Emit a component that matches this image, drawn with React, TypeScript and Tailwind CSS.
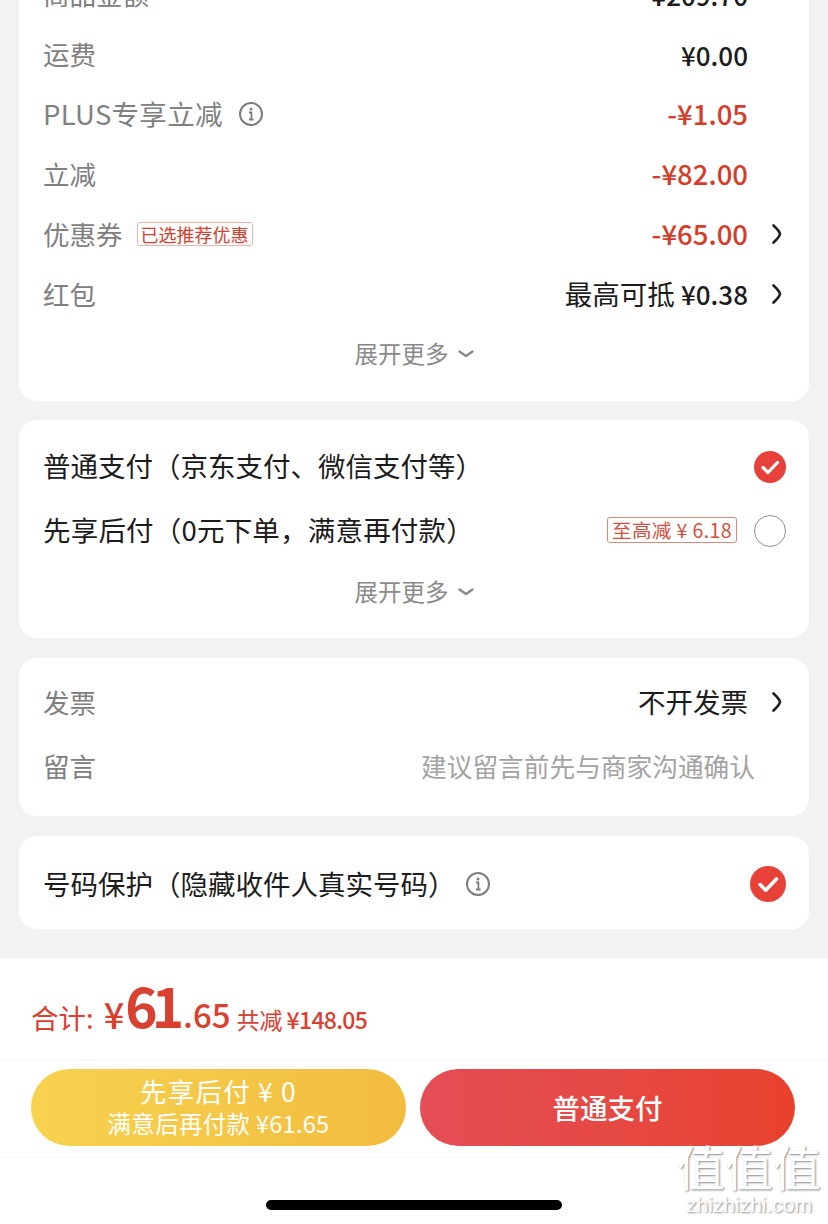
import React from "react";

const font = { fontFamily: '"Noto Sans CJK SC", "Noto Sans", sans-serif' };

const Chevron = () => (
  <svg width="10" height="22" viewBox="0 0 10 22" className="ml-[24px] mr-[-1px] shrink-0">
    <path d="M1.5 2.5 Q7.5 8 8 11 Q7.5 14 1.5 19.5" fill="none" stroke="#1f1f1f" strokeWidth="2.6" strokeLinecap="round" />
  </svg>
);

const Info = () => (
  <svg width="26" height="26" viewBox="0 0 26 26" className="shrink-0">
    <circle cx="13" cy="13" r="11" fill="none" stroke="#7d7d7d" strokeWidth="2" />
    <circle cx="13" cy="8" r="1.5" fill="#7d7d7d" />
    <path d="M11 11.5h2.4v7M11 18.5h4.6" fill="none" stroke="#7d7d7d" strokeWidth="1.8" />
  </svg>
);

const Checked = ({ size }: { size: number }) => (
  <svg width={size} height={size} viewBox="0 0 32 32" className="shrink-0">
    <circle cx="16" cy="16" r="16" fill="#e8413a" />
    <path d="M9 16.5l5 5L23.5 11.5" fill="none" stroke="#fff" strokeWidth="3.2" strokeLinecap="round" strokeLinejoin="round" />
  </svg>
);

const More = () => (
  <div className="flex items-center justify-center h-[60px] text-[23.5px] text-[#8a8a8a]">
    <span>展开更多</span>
    <svg width="16" height="10" viewBox="0 0 16 10" className="ml-[9px]">
      <path d="M1.5 2.5 L8 7 L14.5 2.5" fill="none" stroke="#8a8a8a" strokeWidth="2.4" strokeLinecap="round" />
    </svg>
  </div>
);

const Row = ({ children }: { children: React.ReactNode }) => (
  <div className="flex items-center h-[60px] pl-[24px] pr-[28px]">{children}</div>
);

const Label = ({ children }: { children: React.ReactNode }) => (
  <span className="text-[#808080] text-[26.5px]">{children}</span>
);

export default function App() {
  return (
    <div style={font} className="relative h-[1224px] w-[828px] overflow-hidden bg-[#f2f2f2] text-[27.5px] text-[#1c1c1c]">
      <div className="mt-[-36px] mx-[19px] bg-white rounded-b-[18px] pb-[17px]">
        <Row>
          <Label>商品金额</Label>
          <span className="ml-auto mr-[33px] font-medium text-[26px]">¥209.70</span>
        </Row>
        <Row>
          <Label>运费</Label>
          <span className="ml-auto mr-[33px] font-medium text-[26px]">¥0.00</span>
        </Row>
        <Row>
          <span className="text-[#808080] mr-[15px] tracking-[0.3px]">PLUS专享立减</span>
          <Info />
          <span className="ml-auto mr-[33px] text-[#d43d2a] font-medium">-¥1.05</span>
        </Row>
        <Row>
          <Label>立减</Label>
          <span className="ml-auto mr-[33px] text-[#d43d2a] font-medium">-¥82.00</span>
        </Row>
        <Row>
          <Label>优惠券</Label>
          <span className="ml-[14px] h-[24px] px-[3px] flex items-center rounded-[3px] border border-[#e9b5ad] text-[18px] text-[#d2402f]">已选推荐优惠</span>
          <span className="ml-auto text-[#d43d2a] font-medium">-¥65.00</span>
          <Chevron />
        </Row>
        <Row>
          <Label>红包</Label>
          <span className="ml-auto">最高可抵 <span className="font-medium text-[26px]">¥0.38</span></span>
          <Chevron />
        </Row>
        <More />
      </div>

      <div className="mt-[19px] mx-[19px] bg-white rounded-[18px] pt-[14px] pb-[16px]">
        <div className="flex items-center h-[64px] pl-[24px] pr-[23px]">
          <span>普通支付（京东支付、微信支付等）</span>
          <span className="ml-auto mt-[2px]"><Checked size={32} /></span>
        </div>
        <div className="flex items-center h-[64px] pl-[24px] pr-[23px]">
          <span className="tracking-[0.2px]">先享后付（0元下单，满意再付款）</span>
          <span className="ml-auto h-[26px] px-[4px] flex items-center rounded-[3px] border border-[#d98a7c] text-[19.5px] tracking-[0.4px] text-[#d2503f]">至高减 ¥ 6.18</span>
          <span className="ml-[17px] mt-[2px] h-[32px] w-[32px] rounded-full border-[1.5px] border-[#8f8f8f]" />
        </div>
        <More />
      </div>

      <div className="mt-[20px] mx-[19px] h-[158px] bg-white rounded-[18px] pt-[12px]">
        <div className="flex items-center h-[64px] pl-[24px] pr-[28px]">
          <Label>发票</Label>
          <span className="ml-auto">不开发票</span>
          <Chevron />
        </div>
        <div className="flex items-center h-[64px] pl-[24px] pr-[54px]">
          <Label>留言</Label>
          <span className="ml-auto text-[#a3a3a3] text-[25.7px]">建议留言前先与商家沟通确认</span>
        </div>
      </div>

      <div className="mt-[20px] mx-[19px] h-[93px] bg-white rounded-[18px] flex items-center pl-[24px] pr-[23px] pt-[2px]">
        <span>号码保护（隐藏收件人真实号码）</span>
        <span className="ml-[9px]"><Info /></span>
        <span className="ml-auto"><Checked size={36} /></span>
      </div>

      <div className="mt-[29px] bg-white h-[266px] flex flex-col">
        <div className="h-[103px] pl-[31px] border-b border-[#f7f7f7] flex items-end pb-[29px] text-[#d8402f] font-medium leading-none">
          <span className="text-[27.5px] font-normal mr-[10px]">合计:</span>
          <span className="text-[36px] tracking-[-1px]">¥</span>
          <span className="text-[55px] leading-[44px] font-semibold tracking-[-6px] ml-[2px] mr-[5px] mb-[5px]">61</span>
          <span className="text-[33px]">.65</span>
          <span className="text-[23px] font-normal ml-[6px]">共减</span>
          <span className="text-[23px] ml-[4px] tracking-[-0.7px]">¥148.05</span>
        </div>
        <div className="h-[97px] pl-[31px] pr-[33px] pt-[8px] border-b border-[#f9f9f9] flex gap-[14px]">
          <div className="flex-1 h-[77px] rounded-full bg-gradient-to-r from-[#f7d24f] to-[#f2bc3e] flex flex-col items-center justify-center text-white">
            <span className="text-[26.5px] leading-[33px] tracking-[1.2px] mt-[-2px]">先享后付 ¥ 0</span>
            <span className="text-[23.5px] leading-[32px] tracking-[0.3px]">满意后再付款 ¥61.65</span>
          </div>
          <div className="flex-1 h-[77px] rounded-full bg-gradient-to-r from-[#e44e56] to-[#e8412c] flex items-center justify-center text-white font-medium text-[27.5px]">
            普通支付
          </div>
        </div>
        <div className="flex-1 flex justify-center pt-[42px]">
          <div className="h-[10px] w-[296px] rounded-full bg-black" />
        </div>
      </div>

      <div className="absolute left-[676px] top-[1138px] w-[146px] flex flex-col items-center text-white [text-shadow:1px_1px_2px_#8a8a8a]">
        <span className="text-[48px] leading-[54px] whitespace-nowrap">值值值</span>
        <span className="text-[21px] leading-[26px] whitespace-nowrap" style={{ fontFamily: '"Liberation Sans", sans-serif' }}>zhizhizhi.com</span>
      </div>
    </div>
  );
}
